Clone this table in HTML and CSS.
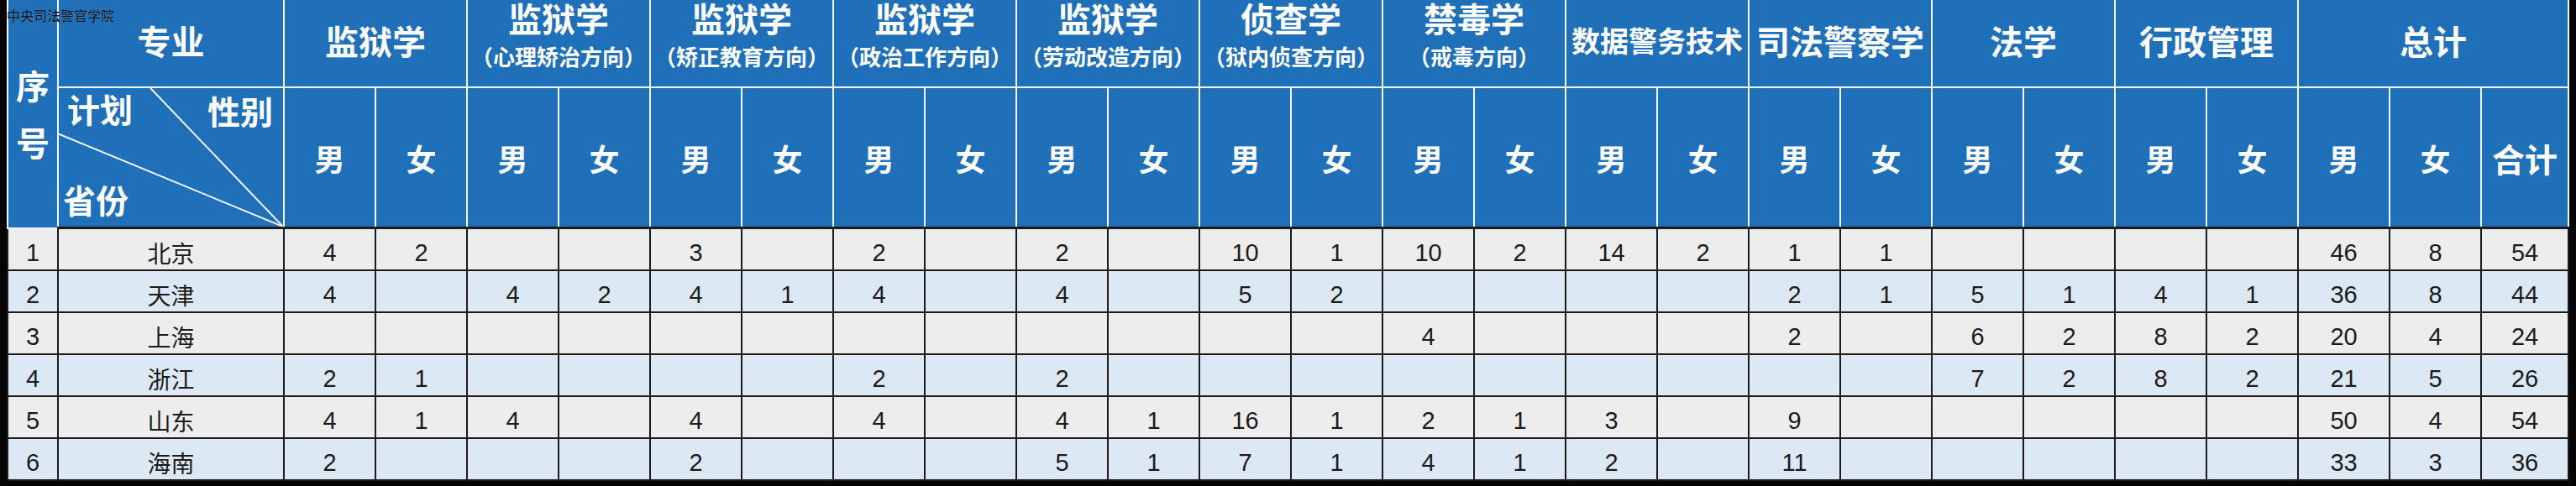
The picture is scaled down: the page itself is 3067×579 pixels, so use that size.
FILE: index.html
```html
<!DOCTYPE html>
<html lang="zh-CN">
<head>
<meta charset="utf-8">
<title>招生计划</title>
<link rel="stylesheet" href="styles.css">
</head>
<body>
<div class="sheet">
  <div class="watermark">中央司法警官学院</div>
  <table class="plan">
    <colgroup>
      <col class="c-no"><col class="c-prov">
      <col class="c-n"><col class="c-n"><col class="c-n"><col class="c-n"><col class="c-n"><col class="c-n">
      <col class="c-n"><col class="c-n"><col class="c-n"><col class="c-n"><col class="c-n"><col class="c-n">
      <col class="c-n"><col class="c-n"><col class="c-n"><col class="c-n"><col class="c-n"><col class="c-n">
      <col class="c-n"><col class="c-n"><col class="c-n"><col class="c-n"><col class="c-n"><col class="c-n">
      <col class="c-sum">
    </colgroup>
    <thead>
      <tr class="h1">
        <th rowspan="2" class="seq"><span>序</span><span>号</span></th>
        <th class="one">专业</th>
        <th colspan="2" class="one">监狱学</th>
        <th colspan="2" class="two"><div class="t">监狱学</div><div class="s">（心理矫治方向）</div></th>
        <th colspan="2" class="two"><div class="t">监狱学</div><div class="s">（矫正教育方向）</div></th>
        <th colspan="2" class="two"><div class="t">监狱学</div><div class="s">（政治工作方向）</div></th>
        <th colspan="2" class="two"><div class="t">监狱学</div><div class="s">（劳动改造方向）</div></th>
        <th colspan="2" class="two"><div class="t">侦查学</div><div class="s">（狱内侦查方向）</div></th>
        <th colspan="2" class="two"><div class="t">禁毒学</div><div class="s">（戒毒方向）</div></th>
        <th colspan="2" class="one narrow">数据警务技术</th>
        <th colspan="2" class="one">司法警察学</th>
        <th colspan="2" class="one">法学</th>
        <th colspan="2" class="one">行政管理</th>
        <th colspan="3" class="one">总计</th>
      </tr>
      <tr class="h2">
        <th class="diag">
          <svg class="diag-lines" viewBox="0 0 269 172" preserveAspectRatio="none" aria-hidden="true">
            <line x1="110" y1="0" x2="269" y2="172"/>
            <line x1="0" y1="57" x2="269" y2="172"/>
          </svg>
          <div class="diag-text">
            <div class="diag-top"><span>计划</span><span>性别</span></div>
            <div class="diag-bottom"><span>省份</span></div>
          </div>
        </th>
        <th>男</th><th>女</th><th>男</th><th>女</th><th>男</th><th>女</th>
        <th>男</th><th>女</th><th>男</th><th>女</th><th>男</th><th>女</th>
        <th>男</th><th>女</th><th>男</th><th>女</th><th>男</th><th>女</th>
        <th>男</th><th>女</th><th>男</th><th>女</th>
        <th>男</th><th>女</th><th class="bold">合计</th>
      </tr>
    </thead>
    <tbody>
      <tr>
        <td>1</td><td class="prov">北京</td>
        <td>4</td><td>2</td><td></td><td></td><td>3</td><td></td><td>2</td><td></td><td>2</td><td></td>
        <td>10</td><td>1</td><td>10</td><td>2</td><td>14</td><td>2</td><td>1</td><td>1</td>
        <td></td><td></td><td></td><td></td><td>46</td><td>8</td><td>54</td>
      </tr>
      <tr>
        <td>2</td><td class="prov">天津</td>
        <td>4</td><td></td><td>4</td><td>2</td><td>4</td><td>1</td><td>4</td><td></td><td>4</td><td></td>
        <td>5</td><td>2</td><td></td><td></td><td></td><td></td><td>2</td><td>1</td>
        <td>5</td><td>1</td><td>4</td><td>1</td><td>36</td><td>8</td><td>44</td>
      </tr>
      <tr>
        <td>3</td><td class="prov">上海</td>
        <td></td><td></td><td></td><td></td><td></td><td></td><td></td><td></td><td></td><td></td>
        <td></td><td></td><td>4</td><td></td><td></td><td></td><td>2</td><td></td>
        <td>6</td><td>2</td><td>8</td><td>2</td><td>20</td><td>4</td><td>24</td>
      </tr>
      <tr>
        <td>4</td><td class="prov">浙江</td>
        <td>2</td><td>1</td><td></td><td></td><td></td><td></td><td>2</td><td></td><td>2</td><td></td>
        <td></td><td></td><td></td><td></td><td></td><td></td><td></td><td></td>
        <td>7</td><td>2</td><td>8</td><td>2</td><td>21</td><td>5</td><td>26</td>
      </tr>
      <tr>
        <td>5</td><td class="prov">山东</td>
        <td>4</td><td>1</td><td>4</td><td></td><td>4</td><td></td><td>4</td><td></td><td>4</td><td>1</td>
        <td>16</td><td>1</td><td>2</td><td>1</td><td>3</td><td></td><td>9</td><td></td>
        <td></td><td></td><td></td><td></td><td>50</td><td>4</td><td>54</td>
      </tr>
      <tr>
        <td>6</td><td class="prov">海南</td>
        <td>2</td><td></td><td></td><td></td><td>2</td><td></td><td></td><td></td><td>5</td><td>1</td>
        <td>7</td><td>1</td><td>4</td><td>1</td><td>2</td><td></td><td>11</td><td></td>
        <td></td><td></td><td></td><td></td><td>33</td><td>3</td><td>36</td>
      </tr>
    </tbody>
  </table>
</div>
</body>
</html>
```

FILE: styles.css
```css
html, body {
  margin: 0;
  padding: 0;
  background: #050505;
}

.sheet {
  position: relative;
  width: 3067px;
  height: 579px;
  overflow: hidden;
  background: #050505;
}

.watermark {
  position: absolute;
  top: 9px;
  left: 8px;
  font-family: "Noto Sans CJK SC", sans-serif;
  font-size: 16px;
  font-weight: 500;
  line-height: 18px;
  color: #0b1c31;
  text-shadow: 0 0 1px rgba(170, 200, 235, 0.7);
  z-index: 2;
  white-space: nowrap;
}

.plan {
  margin-left: 8px;
  width: 3049px;
  table-layout: fixed;
  border-collapse: collapse;
  border-spacing: 0;
}

.c-no { width: 60px; }
.c-prov { width: 269px; }
.c-n { width: 109px; }
.c-sum { width: 104px; }

.plan th {
  background: #1f6fb9;
  color: #ffffff;
  font-family: "Noto Sans CJK SC", sans-serif;
  font-weight: 700;
  border: 2px solid #f4f7fb;
  padding: 0;
  text-align: center;
  white-space: nowrap;
}

.plan thead tr:first-child th { border-top: none; }

.h1 th { height: 95px; }

.h1 th.one {
  font-size: 40px;
  line-height: 44px;
  vertical-align: middle;
  padding-bottom: 8px;
}

.h1 th.narrow {
  font-size: 34px;
}

.h1 th.two {
  vertical-align: top;
}

.two .t {
  font-size: 40px;
  line-height: 38px;
  margin-top: 2px;
}

.two .s {
  font-size: 26px;
  line-height: 30px;
  margin-top: 12px;
}

.seq {
  font-size: 40px;
  vertical-align: middle;
}

.seq span {
  display: block;
  line-height: 68px;
}

.h2 th {
  height: 165px;
  font-size: 36px;
  font-weight: 700;
  border-bottom: 3px solid #1a1a1a;
}

.h2 th.bold { font-size: 39px; }

.h2 th.diag {
  position: relative;
  font-size: 39px;
  padding: 0;
}

.diag-lines {
  position: absolute;
  left: 0;
  top: 0;
  width: 100%;
  height: 100%;
}

.diag-lines line {
  stroke: #f4f7fb;
  stroke-width: 2;
}

.diag-text {
  position: relative;
  height: 165px;
  display: flex;
  flex-direction: column;
  justify-content: space-between;
  padding: 0 12px 9px 5px;
  box-sizing: border-box;
}

.diag-top {
  display: flex;
  justify-content: space-between;
  align-items: flex-start;
  padding-left: 5px;
  line-height: 48px;
}

.diag-top span:last-child { margin-top: 2px; }

.diag-bottom {
  text-align: left;
  line-height: 48px;
}

.plan td {
  height: 50px;
  border: 2px solid #1e1a1a;
  padding: 8px 0 0;
  box-sizing: border-box;
  text-align: center;
  font-family: "Liberation Sans", "Noto Sans CJK SC", sans-serif;
  font-size: 29px;
  line-height: 36px;
  color: #1b1b1b;
  background: #eeeded;
}

.plan tbody tr:nth-child(even) td { background: #dde8f5; }

.plan td.prov {
  font-family: "Noto Sans CJK SC", sans-serif;
  font-size: 28px;
}
```
